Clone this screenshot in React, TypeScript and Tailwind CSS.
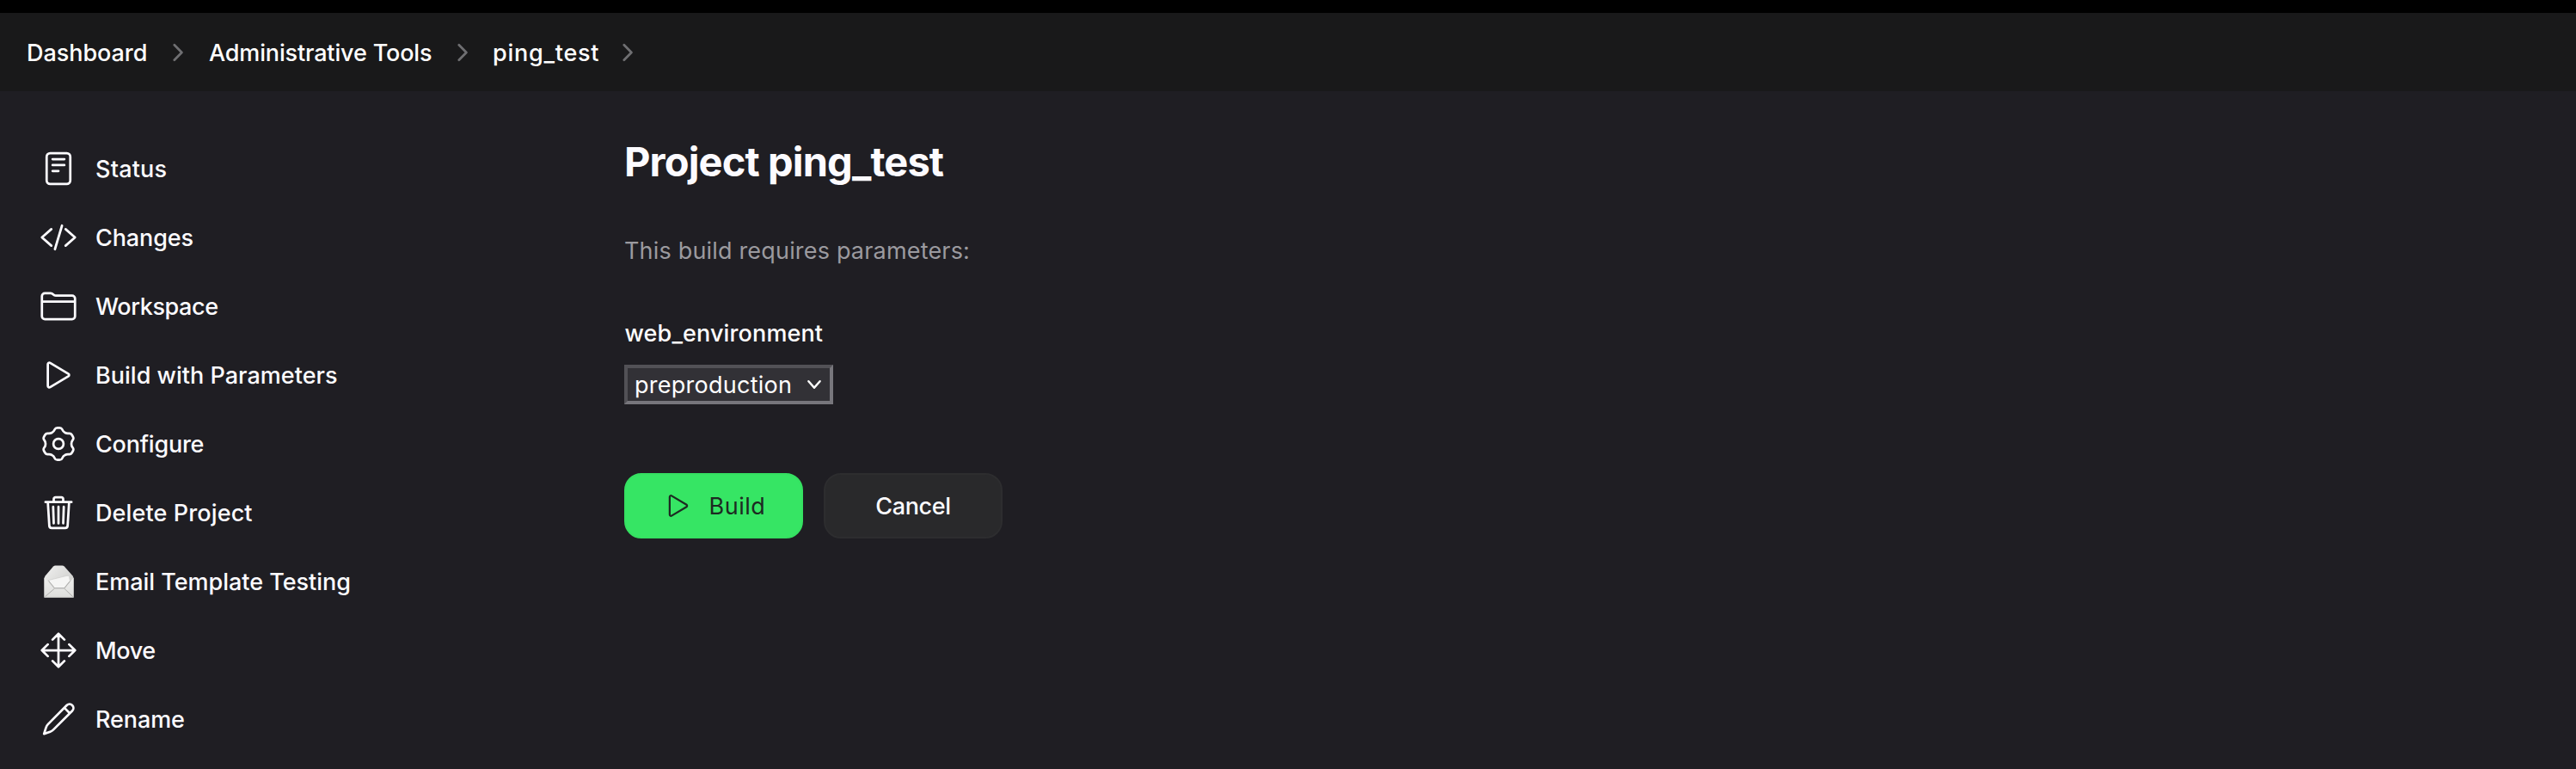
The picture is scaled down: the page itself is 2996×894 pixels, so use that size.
import type { ReactNode } from "react";

type Point = [number, number];

function roundedPolygon(points: Point[], radius: number): string {
  const n = points.length;
  const toward = (a: Point, b: Point): Point => {
    const len = Math.hypot(b[0] - a[0], b[1] - a[1]);
    const t = Math.min(radius, len / 2) / len;
    return [a[0] + (b[0] - a[0]) * t, a[1] + (b[1] - a[1]) * t];
  };
  const f = (p: Point) => `${p[0].toFixed(2)} ${p[1].toFixed(2)}`;
  return (
    points
      .map((p, i) => {
        const start = toward(p, points[(i + n - 1) % n]);
        const end = toward(p, points[(i + 1) % n]);
        return `${i === 0 ? "M" : "L"}${f(start)}Q${f(p)} ${f(end)}`;
      })
      .join("") + "Z"
  );
}

const tooth: Point[] = [
  [-5.5, -14.2],
  [-3.5, -18.7],
  [3.5, -18.7],
  [5.5, -14.2],
];

const gearPath = roundedPolygon(
  [0, 1, 2, 3, 4, 5].flatMap((k) => {
    const a = (k * Math.PI) / 3;
    return tooth.map(
      ([x, y]): Point => [
        24 + x * Math.cos(a) - y * Math.sin(a),
        24 + x * Math.sin(a) + y * Math.cos(a),
      ],
    );
  }),
  2.2,
);

function Glyph({ children, className = "size-11" }: { children: ReactNode; className?: string }) {
  return (
    <svg
      viewBox="0 0 512 512"
      className={className}
      fill="none"
      stroke="currentColor"
      strokeWidth={32}
      strokeLinecap="round"
      strokeLinejoin="round"
    >
      {children}
    </svg>
  );
}

function Glyph48({ children }: { children: ReactNode }) {
  return (
    <svg
      viewBox="0 0 48 48"
      className="size-12"
      fill="none"
      stroke="currentColor"
      strokeWidth={2.7}
      strokeLinecap="round"
      strokeLinejoin="round"
    >
      {children}
    </svg>
  );
}

const playPath =
  "M112 111v290c0 17.44 17 28.52 31 20.16l247.9-148.37c12.12-7.25 12.12-26.33 0-33.58L143 90.84c-14-8.36-31 2.72-31 20.16z";

const StatusIcon = (
  <Glyph>
    <rect x="96" y="48" width="320" height="416" rx="48" />
    <path d="M176 128h160M176 208h160M176 288h80" />
  </Glyph>
);

const CodeIcon = (
  <Glyph>
    <path d="M160 368L32 256l128-112M352 368l128-112-128-112M304 96l-96 320" />
  </Glyph>
);

const FolderIcon = (
  <Glyph>
    <path d="M440 432H72a40 40 0 01-40-40V120a40 40 0 0140-40h75.89a40 40 0 0122.19 6.72l27.84 18.56a40 40 0 0022.19 6.72H440a40 40 0 0140 40v240a40 40 0 01-40 40zM32 192h448" />
  </Glyph>
);

const PlayIcon = (
  <Glyph>
    <path d={playPath} />
  </Glyph>
);

const GearIcon = (
  <Glyph48>
    <path d={gearPath} />
    <circle cx="24" cy="24" r="5.9" />
  </Glyph48>
);

const TrashIcon = (
  <Glyph>
    <path d="M112 112l20 320c.95 18.49 14.4 32 32 32h184c17.67 0 30.87-13.51 32-32l20-320M80 112h352M192 112V72a23.93 23.93 0 0124-24h80a23.93 23.93 0 0124 24v40M256 176v224M184 176l8 224M328 176l-8 224" />
  </Glyph>
);

const EnvelopeIcon = (
  <svg viewBox="0 0 48 48" className="size-12" fill="none" strokeLinejoin="round">
    <defs>
      <linearGradient id="flap" x1="0" y1="0" x2="1" y2="1">
        <stop offset="0" stopColor="#f1f1f0" />
        <stop offset="1" stopColor="#c3c3c1" />
      </linearGradient>
      <linearGradient id="body" x1="0" y1="0" x2="0" y2="1">
        <stop offset="0" stopColor="#efefee" />
        <stop offset="1" stopColor="#dededc" />
      </linearGradient>
    </defs>
    <path d="M7.5 20L8.6 17.4 18 6.6Q19 5.6 20.4 5.6H28.4Q29.8 5.6 30.8 6.6L40.6 17.4 41.6 20V42.6H7.5Z" fill="url(#flap)" />
    <path d="M7.5 19.5L18.5 32.3H31.5L41.6 19.5V42.6H7.5Z" fill="url(#body)" />
    <path d="M12.2 22.6L34 17.3Q36 17 36.6 18.6L37.4 23.4 30.6 31.6H19.6Z" fill="#f5f5f4" stroke="#c6c6c4" strokeWidth={0.6} />
    <path d="M12.6 23.4L19.4 31.8H30.8L37.4 23.6M8.5 41.6L19.4 32.2M40.6 41.6L30.8 32.2" stroke="#a9a9a7" strokeWidth={0.9} />
    <path d="M7.7 42.4H41.4" stroke="#b9b9b7" strokeWidth={0.8} />
  </svg>
);

const MoveIcon = (
  <Glyph>
    <path d="M176 112l80-80 80 80M256 32v448M176 400l80 80 80-80M400 176l80 80-80 80M112 176l-80 80 80 80M32 256h448" />
  </Glyph>
);

const PencilIcon = (
  <Glyph48>
    <path d="M33.8 7.8A4.53 4.53 0 0 1 40.2 14.2L18 36.4Q16.4 38 14.3 38.7L7.2 41.1 9.5 33.9Q10.1 31.7 11.7 30.1ZM30.9 10.9L37.2 17.2" />
  </Glyph48>
);

const tasks: { label: string; icon: ReactNode; tracking: string }[] = [
  { label: "Status", icon: StatusIcon, tracking: "tracking-[0.2px]" },
  { label: "Changes", icon: CodeIcon, tracking: "tracking-[-0.12px]" },
  { label: "Workspace", icon: FolderIcon, tracking: "tracking-[-0.4px]" },
  { label: "Build with Parameters", icon: PlayIcon, tracking: "tracking-[0.02px]" },
  { label: "Configure", icon: GearIcon, tracking: "tracking-[-0.22px]" },
  { label: "Delete Project", icon: TrashIcon, tracking: "tracking-[0.12px]" },
  { label: "Email Template Testing", icon: EnvelopeIcon, tracking: "tracking-[-0.02px]" },
  { label: "Move", icon: MoveIcon, tracking: "tracking-[-0.4px]" },
  { label: "Rename", icon: PencilIcon, tracking: "tracking-[-0.1px]" },
];

function Crumb({ label, className }: { label: string; className: string }) {
  return (
    <li className="flex items-center">
      <a href="#" className={`pt-[3px] whitespace-nowrap ${className}`}>
        {label}
      </a>
      <svg
        viewBox="0 0 12 22"
        className="mx-[30px] h-[22px] w-3"
        fill="none"
        stroke="#6f6f72"
        strokeWidth={2.7}
        strokeLinecap="round"
        strokeLinejoin="round"
      >
        <path d="M1.8 2.2L10.4 11 1.8 19.8" />
      </svg>
    </li>
  );
}

export default function App() {
  return (
    <div className="flex h-[894px] w-full flex-col overflow-hidden bg-[#1f1e23] font-['Inter',sans-serif] text-[27px] leading-9 font-medium text-[#fcfbff]">
      <div className="h-[15px] shrink-0 bg-black" />
      <header className="h-[91px] shrink-0 bg-[#19191a] pl-[31px] text-white">
        <ol className="flex h-full items-center">
          <Crumb label="Dashboard" className="w-[140px] tracking-[-0.05px]" />
          <Crumb label="Administrative Tools" className="w-[259px] tracking-[-0.15px]" />
          <Crumb label="ping_test" className="-ml-px w-[121px] tracking-[0.75px]" />
        </ol>
      </header>
      <div className="flex grow">
        <nav className="w-[726px] shrink-0 pt-[50px]">
          <ul>
            {tasks.map((task) => (
              <li key={task.label}>
                <a href="#" className="flex h-20 items-center pl-11">
                  <span className="flex size-12 items-center justify-center">{task.icon}</span>
                  <span className={`pt-0.5 pl-[19px] ${task.tracking}`}>{task.label}</span>
                </a>
              </li>
            ))}
          </ul>
        </nav>
        <main className="flex flex-col items-start pt-[52px]">
          <h1 className="h-[60px] text-[47px] leading-[60px] font-bold tracking-[-0.87px]">
            Project ping_test
          </h1>
          <p className="mt-14 font-normal tracking-[0.18px] text-[#9b9a9f]">
            This build requires parameters:
          </p>
          <label className="mt-[60px] pl-[0.5px] tracking-[0.13px] text-white">
            web_environment
          </label>
          <button className="mt-[18px] flex h-[46px] w-[243px] items-center justify-between border-4 border-t-[#525156] border-r-[#77767c] border-b-[#77767c] border-l-[#525156] bg-[#323136] pr-[9px] pl-2 text-white">
            <span className="pt-0.5 font-normal tracking-[0.26px]">preproduction</span>
            <svg
              viewBox="0 0 18 14"
              className="h-3.5 w-[18px]"
              fill="none"
              stroke="currentColor"
              strokeWidth={2.5}
              strokeLinecap="round"
              strokeLinejoin="round"
            >
              <path d="M2.4 3.2L9 10.8 15.6 3.2" />
            </svg>
          </button>
          <div className="mt-20 flex gap-6">
            <button className="flex h-[76px] w-[208px] items-center rounded-[20px] border-2 border-[#35e061] bg-[#36e564] pl-[43px] font-normal text-[#1d2a22]">
              <Glyph className="size-9">
                <path d={playPath} />
              </Glyph>
              <span className="pt-0.5 pl-[17.5px] tracking-[0.5px]">Build</span>
            </button>
            <button className="flex h-[76px] w-[208px] items-center justify-center rounded-[20px] border-2 border-[#2d2d2f] bg-[#29292b]">
              <span className="pt-0.5 tracking-[-0.33px]">Cancel</span>
            </button>
          </div>
        </main>
      </div>
    </div>
  );
}
